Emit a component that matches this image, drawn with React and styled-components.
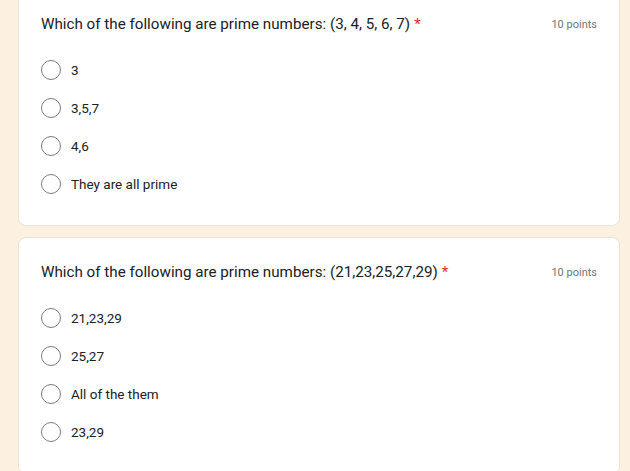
import React from "react";
import styled, { createGlobalStyle } from "styled-components";

const questions = [
	{
		title: "Which of the following are prime numbers: (3, 4, 5, 6, 7)",
		points: 10,
		options: ["3", "3,5,7", "4,6", "They are all prime"],
	},
	{
		title: "Which of the following are prime numbers: (21,23,25,27,29)",
		points: 10,
		options: ["21,23,29", "25,27", "All of the them", "23,29"],
	},
];

function App() {
	return (
		<>
			<GlobalStyle />
			<Page>
				{questions.map((q, i) => (
					<Card key={i}>
						<Header>
							<Title>
								{q.title}
								<Required>*</Required>
							</Title>
							<Points>{q.points} points</Points>
						</Header>
						<Options>
							{q.options.map((opt) => (
								<Option key={opt}>
									<Radio />
									<Label>{opt}</Label>
								</Option>
							))}
						</Options>
					</Card>
				))}
			</Page>
		</>
	);
}

export default App;

const GlobalStyle = createGlobalStyle`
	html, body {
		margin: 0;
		padding: 0;
		background: #fcf0e1;
		overflow: hidden;
	}
	body {
		font-family: Roboto, "Liberation Sans", sans-serif;
	}
`;

const Page = styled.div`
	display: flex;
	flex-direction: column;
	gap: 11px;
	margin-top: -11px;
	padding: 0 10px 0 18px;
`;

const Card = styled.div`
	background: #fff;
	border: 1px solid #ece3d7;
	border-radius: 8px;
	padding: 23px 22px 22px;
	min-height: 190px;
`;

const Header = styled.div`
	display: flex;
	justify-content: space-between;
	align-items: center;
	height: 22px;
`;

const Title = styled.div`
	font-size: 15.2px;
	color: #202124;
`;

const Required = styled.span`
	color: #d93025;
	margin-left: 4px;
`;

const Points = styled.div`
	font-size: 11px;
	color: #70757a;
`;

const Options = styled.div`
	display: flex;
	flex-direction: column;
	margin-top: 24.5px;
	gap: 18px;
`;

const Option = styled.div`
	display: flex;
	align-items: center;
	height: 20px;
`;

const Radio = styled.span`
	box-sizing: border-box;
	width: 20px;
	height: 20px;
	border: 1.5px solid #7a7d81;
	border-radius: 50%;
	margin-right: 10px;
`;

const Label = styled.span`
	font-size: 13.5px;
	color: #202124;
`;
